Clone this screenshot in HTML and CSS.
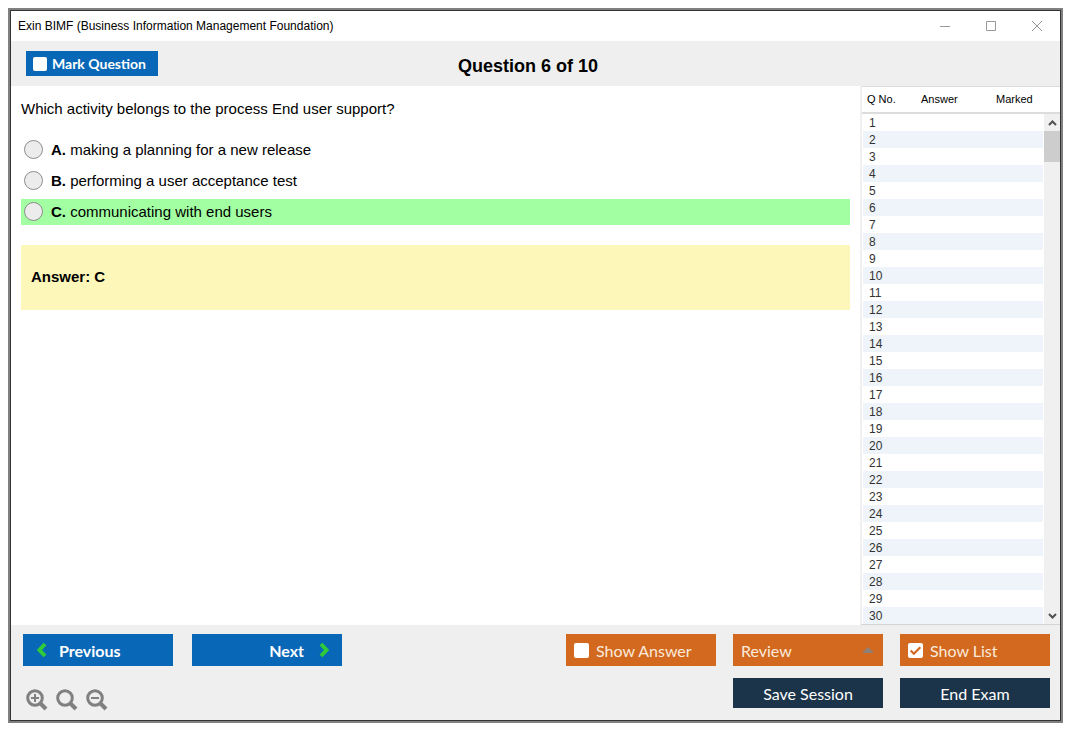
FILE: index.html
```html
<!DOCTYPE html>
<html lang="en">
<head>
    <meta charset="UTF-8">
    <meta name="viewport" content="width=device-width, initial-scale=1.0">
    <title>Exin BIMF (Business Information Management Foundation)</title>
    <link rel="stylesheet" href="styles.css">
</head>

<body>
    <div class="window">
        <div class="title-bar">
            <span>Exin BIMF (Business Information Management Foundation)</span>
            <div class="window-buttons">
                <button type="button" aria-label="Minimize">
                    <svg width="12" height="12" viewBox="0 0 12 12"><path d="M1 6.500h10"/></svg>
                </button>
                <button type="button" aria-label="Maximize">
                    <svg width="12" height="12" viewBox="0 0 12 12"><path d="M1.500 1.500h9v9h-9z"/></svg>
                </button>
                <button type="button" aria-label="Close">
                    <svg width="12" height="12" viewBox="0 0 12 12"><path d="M1 1l10 10M11 1L1 11"/></svg>
                </button>
            </div>
        </div>

        <header class="header">
            <label class="mark-question"><input type="checkbox" class="check"> Mark Question</label>
            <h1>Question 6 of 10</h1>
        </header>

        <main class="main">
            <section class="question">
                <p class="question-text">Which activity belongs to the process End user support?</p>
                <label class="option"><input type="radio" name="option" value="A"><span><b>A.</b> making a planning for a new release</span></label>
                <label class="option"><input type="radio" name="option" value="B"><span><b>B.</b> performing a user acceptance test</span></label>
                <label class="option correct"><input type="radio" name="option" value="C"><span><b>C.</b> communicating with end users</span></label>
                <div class="answer">Answer: C</div>
            </section>

            <aside class="list">
                <table>
                    <thead>
                        <tr><th class="col-number">Q No.</th><th class="col-answer">Answer</th><th>Marked</th></tr>
                    </thead>
                    <tbody id="question-list"></tbody>
                </table>
                <div class="scroll">
                    <div class="scroll-head"></div>
                    <button type="button" aria-label="Scroll up">
                        <svg width="9" height="6" viewBox="0 0 9 6"><path d="M1 5l3.500-3.500L8 5"/></svg>
                    </button>
                    <div class="scroll-thumb"></div>
                    <button type="button" class="scroll-down" aria-label="Scroll down">
                        <svg width="9" height="6" viewBox="0 0 9 6"><path d="M1 1l3.500 3.500L8 1"/></svg>
                    </button>
                </div>
            </aside>
        </main>

        <footer class="footer">
            <div class="footer-left">
                <div class="nav">
                    <button type="button" class="button blue previous">
                        <svg width="10" height="16" viewBox="0 0 10 16"><path d="M8 2L2.500 8 8 14"/></svg>
                        Previous
                    </button>
                    <button type="button" class="button blue next">
                        Next
                        <svg width="10" height="16" viewBox="0 0 10 16"><path d="M2 2l5.500 6L2 14"/></svg>
                    </button>
                </div>
                <div class="zoom">
                    <button type="button" aria-label="Zoom in">
                        <svg width="22" height="22" viewBox="0 0 22 22"><circle cx="9" cy="9" r="7.300"/><path class="handle" d="M14.500 14.500l5.500 5.500"/><path class="sign" d="M5 9h8M9 5v8"/></svg>
                    </button>
                    <button type="button" aria-label="Reset zoom">
                        <svg width="22" height="22" viewBox="0 0 22 22"><circle cx="9" cy="9" r="7.300"/><path class="handle" d="M14.500 14.500l5.500 5.500"/></svg>
                    </button>
                    <button type="button" aria-label="Zoom out">
                        <svg width="22" height="22" viewBox="0 0 22 22"><circle cx="9" cy="9" r="7.300"/><path class="handle" d="M14.500 14.500l5.500 5.500"/><path class="sign" d="M5 9h8"/></svg>
                    </button>
                </div>
            </div>
            <div class="footer-right">
                <label class="button orange"><input type="checkbox" class="check"> Show Answer</label>
                <div class="review">
                    <select class="button orange" aria-label="Review">
                        <option>Review</option>
                    </select>
                    <svg width="12" height="6" viewBox="0 0 12 6"><path d="M0 6l6-6 6 6z"/></svg>
                </div>
                <label class="button orange"><input type="checkbox" class="check" checked> Show List</label>
                <button type="button" class="button dark save">Save Session</button>
                <button type="button" class="button dark">End Exam</button>
            </div>
        </footer>
    </div>

    <script>
        const list = document.getElementById('question-list');

        for (let i = 1; i <= 30; i++) {
            list.innerHTML += `<tr><td>${i}</td><td></td><td></td></tr>`;
        }
    </script>
</body>
</html>
```
FILE: styles.css
```css
* {
    box-sizing: border-box;
}

body {
    margin: 0;
    padding: 8px 12px 12px 8px;
    min-height: 100vh;
    display: flex;
    background: #fff;
    color: #000;
    font-family: "Liberation Sans", Arial, sans-serif;
    font-size: 15px;
}

button {
    border: none;
    padding: 0;
    background: none;
    cursor: pointer;
}

svg {
    display: block;
    fill: none;
}

.window {
    flex: 1;
    display: flex;
    flex-direction: column;
    border: 1px solid #333;
    outline: 2px solid #808080;
    margin: 2px;
}

/* Title bar */
.title-bar {
    display: flex;
    justify-content: space-between;
    align-items: center;
    height: 30px;
    padding: 0 17px 0 7px;
    font-size: 12px;
}

.window-buttons {
    display: flex;
    gap: 34px;
}

.window-buttons svg {
    stroke: #999;
}

/* Header */
.header {
    display: grid;
    grid-template-columns: 1fr auto 1fr;
    align-items: center;
    height: 45px;
    padding: 0 30px 0 15px;
    background: #efefef;
}

.header h1 {
    margin: 0;
    padding-top: 5px;
    font-size: 18px;
}

.mark-question {
    justify-self: start;
    display: flex;
    align-items: center;
    gap: 5px;
    height: 25px;
    padding: 0 12px 0 7px;
    background: #0867b6;
    color: #fff;
    font-family: Lato, Calibri, sans-serif;
    font-size: 14px;
    font-weight: bold;
}

.check {
    appearance: none;
    width: 14px;
    height: 14px;
    margin: 0;
    border-radius: 2px;
    background: #fff;
}

/* Question */
.main {
    flex: 1;
    display: flex;
}

.question {
    flex: 1;
    padding: 14px 10px;
}

.question-text {
    margin: 0 0 19px;
    line-height: 18px;
}

.option {
    display: flex;
    align-items: center;
    gap: 8px;
    height: 26px;
    margin-bottom: 5px;
    padding: 0 0 2px 3px;
}

.option input {
    appearance: none;
    width: 19px;
    height: 19px;
    margin: 0;
    border: 1px solid #8c8c8c;
    border-radius: 50%;
    background: #ececec;
}

.option.correct {
    background: #a2ffa2;
}

.answer {
    margin-top: 20px;
    padding: 22px 10px 23px;
    background: #fdf7b9;
    font-weight: bold;
    line-height: 20px;
}

/* Question list */
.list {
    display: flex;
    width: 200px;
    border-left: 2px solid #f0f0f0;
    border-bottom: 1px solid #d4d4d4;
}

.list table {
    flex: 1;
    border-collapse: separate;
    border-spacing: 0;
    table-layout: fixed;
}

.list th {
    height: 28px;
    padding: 0 0 2px 5px;
    border-top: 1px solid #dcdcdc;
    border-bottom: 2px solid #dcdcdc;
    font-size: 11px;
    font-weight: normal;
    text-align: left;
    white-space: nowrap;
}

.col-number {
    width: 54px;
}

.col-answer {
    width: 75px;
}

.list td {
    height: 17px;
    padding: 2px 0 0 6px;
    color: #333;
    font-size: 12px;
    line-height: 15px;
}

.list td:first-child {
    border-left: 1px solid #fff;
}

.list td:last-child {
    border-right: 1px solid #fff;
}

.list tbody tr:nth-child(even) {
    background: #eef4f9;
}

.scroll {
    display: flex;
    flex-direction: column;
    width: 16px;
    background: #f0f0f0;
}

.scroll-head {
    height: 28px;
    border-top: 1px solid #dcdcdc;
    border-bottom: 2px solid #dcdcdc;
    background: #fff;
}

.scroll button {
    display: flex;
    align-items: center;
    justify-content: center;
    height: 17px;
}

.scroll svg {
    stroke: #505050;
    stroke-width: 2;
}

.scroll-thumb {
    height: 31px;
    background: #cdcdcd;
}

.scroll .scroll-down {
    margin-top: auto;
}

/* Footer */
.footer {
    display: flex;
    justify-content: space-between;
    padding: 9px 10px 9px 12px;
    background: #efefef;
}

.nav {
    display: flex;
    gap: 19px;
}

.button {
    display: flex;
    align-items: center;
    gap: 7px;
    width: 150px;
    height: 32px;
    padding: 0 8px;
    color: #fff;
    font-family: Lato, Calibri, sans-serif;
    font-size: 16px;
}

.blue {
    background: #0867b6;
    font-weight: bold;
}

.blue svg {
    stroke: #2fcb3a;
    stroke-width: 4;
}

.previous {
    gap: 12px;
    padding-left: 14px;
}

.next {
    justify-content: flex-end;
    gap: 15px;
    padding-right: 13px;
}

.orange {
    background: #d2691e;
    color: #fbe9dc;
}

.orange .check:checked {
    background: #fff url("data:image/svg+xml,%3Csvg xmlns='http://www.w3.org/2000/svg' viewBox='0 0 14 14'%3E%3Cpath d='M2.500 7l3 3 6-6' fill='none' stroke='%23d2691e' stroke-width='2'/%3E%3C/svg%3E");
}

.button .check {
    width: 15px;
    height: 15px;
}

.dark {
    justify-content: center;
    height: 30px;
    background: #1b344a;
}

.zoom {
    display: flex;
    gap: 8px;
    padding: 23px 0 0 3px;
}

.zoom svg {
    stroke: #808080;
    stroke-width: 3;
}

.zoom .handle {
    stroke-width: 4;
}

.zoom .sign {
    stroke-width: 2;
}

.footer-right {
    display: grid;
    grid-template-columns: repeat(3, 150px);
    align-content: start;
    gap: 12px 17px;
}

.review {
    position: relative;
}

.review select {
    appearance: none;
    border: none;
    border-radius: 0;
}

/* Arrow over the select */
.review svg {
    position: absolute;
    right: 9px;
    top: 13px;
    fill: #8c8078;
    pointer-events: none;
}

.save {
    grid-column: 2;
}
```
